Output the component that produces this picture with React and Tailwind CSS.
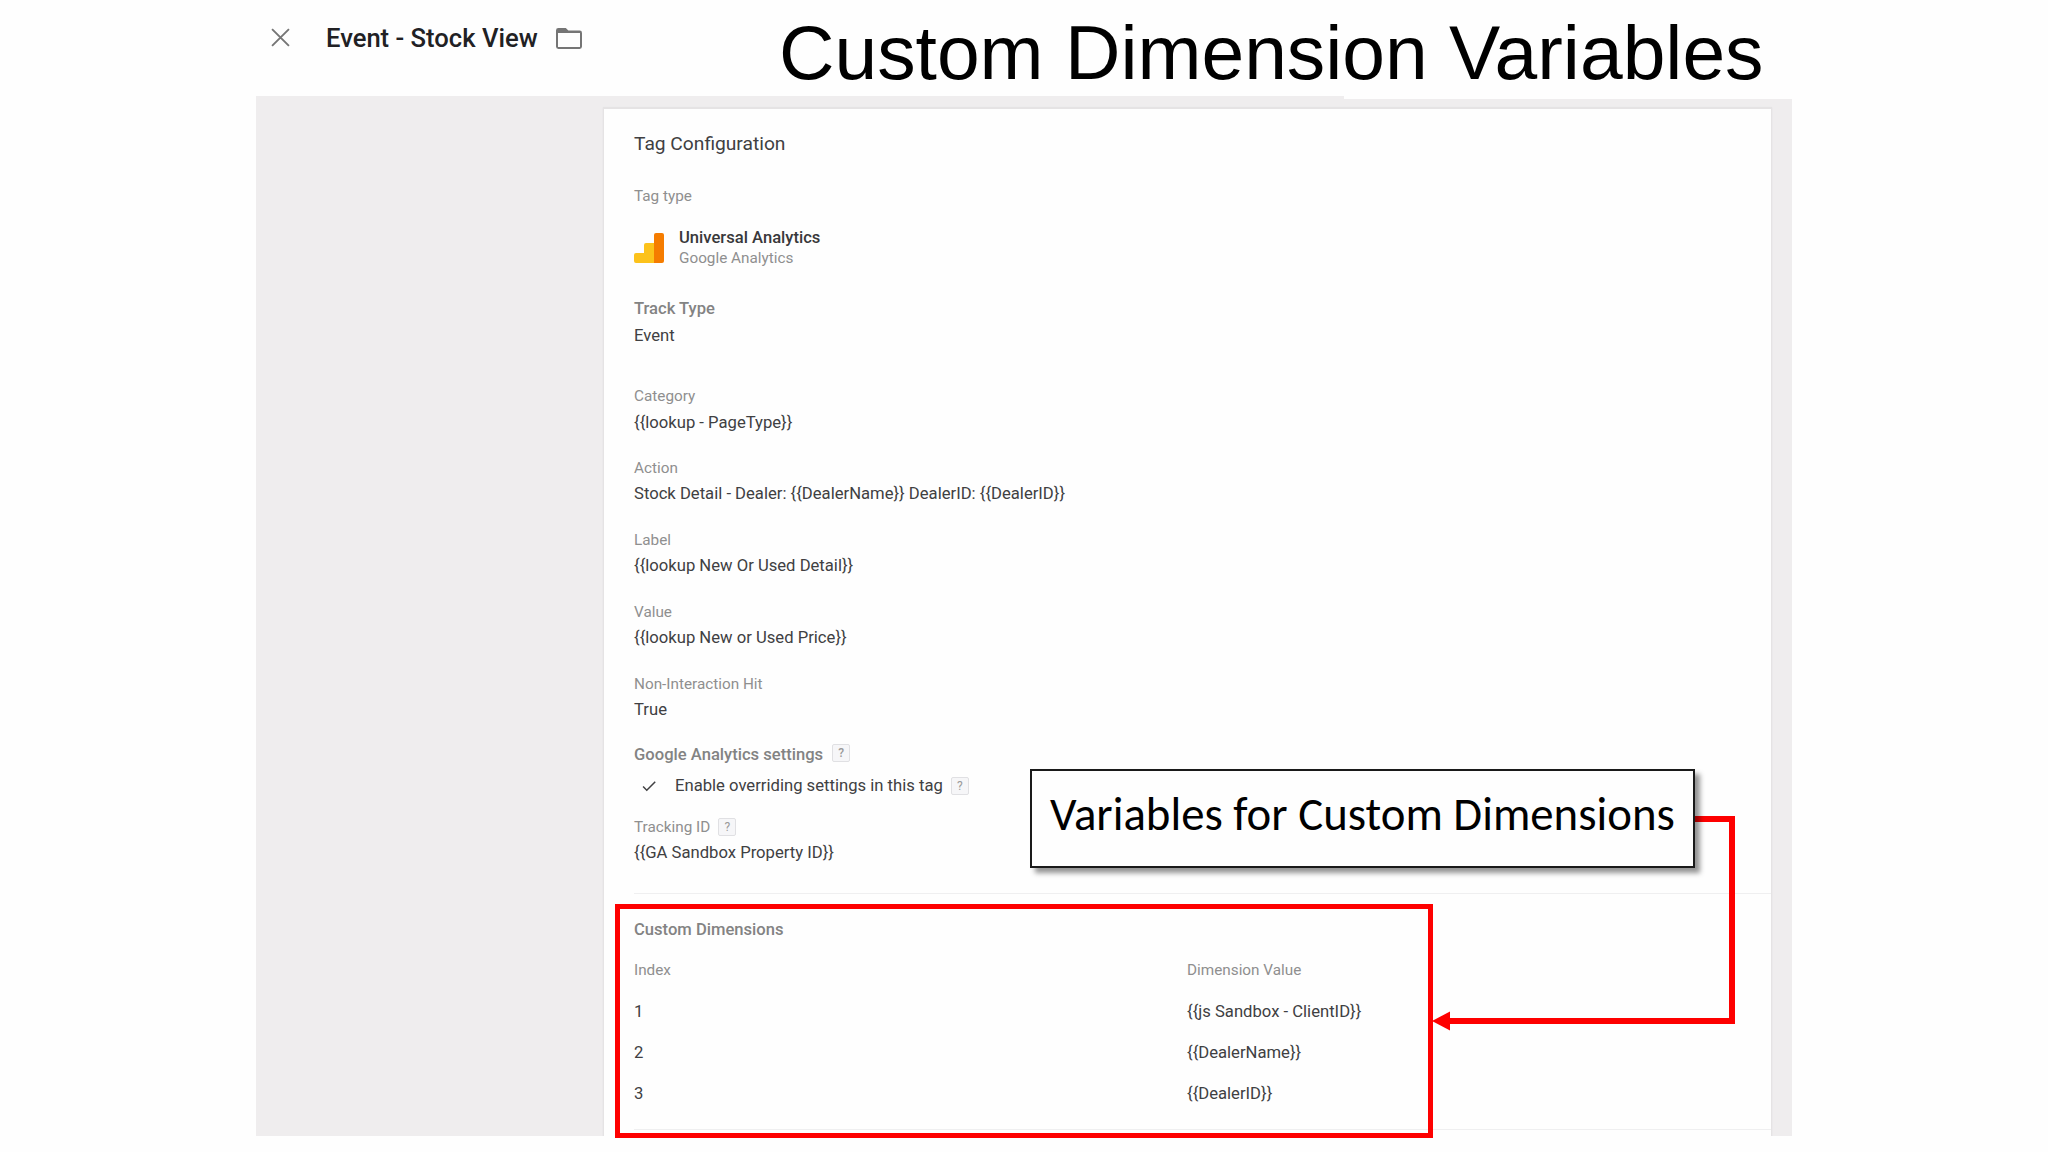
import { MdCheck } from 'react-icons/md';

const fields = [
  { label: 'Category', value: '{{lookup - PageType}}' },
  { label: 'Action', value: 'Stock Detail - Dealer: {{DealerName}} DealerID: {{DealerID}}' },
  { label: 'Label', value: '{{lookup New Or Used Detail}}' },
  { label: 'Value', value: '{{lookup New or Used Price}}' },
  { label: 'Non-Interaction Hit', value: 'True' },
];

const dimensions = [
  { index: '1', value: '{{js Sandbox - ClientID}}' },
  { index: '2', value: '{{DealerName}}' },
  { index: '3', value: '{{DealerID}}' },
];

const labelClass = 'text-[15.3px] leading-5 text-[#8f8f8f]';
const valueClass = 'text-[16.65px] leading-5 text-[#404042]';
const headingClass = 'text-[16.6px] leading-5 font-medium text-[#838383]';

const Help = () => (
  <span className="flex h-[18px] w-[18px] items-center justify-center rounded-[2px] border border-[#e0e0e3] bg-[#f6f6f8] text-[12px] leading-none text-[#9a9a9a]">
    ?
  </span>
);

const Field = ({ label, value, help }) => (
  <div>
    <div className={`flex items-center gap-2 ${labelClass}`}>
      {label}
      {help && <Help />}
    </div>
    <div className={`mt-[6.6px] whitespace-nowrap ${valueClass}`}>{value}</div>
  </div>
);

const AnalyticsLogo = () => (
  <svg width="30" height="30" viewBox="0 0 30 30">
    <path d="M2 20H10V12a2 2 0 0 1 2-2h8v20H2a2 2 0 0 1-2-2v-6a2 2 0 0 1 2-2z" fill="#fcc21b" />
    <path d="M22 0h6a2 2 0 0 1 2 2v26a2 2 0 0 1-2 2h-8V2a2 2 0 0 1 2-2z" fill="#f57c00" />
  </svg>
);

const Header = () => (
  <header className="flex h-24 items-start">
    <svg className="mt-[28px] ml-[15px]" width="19" height="19" viewBox="0 0 18 18" fill="none" stroke="#757575" strokeWidth="1.8">
      <path d="M1 1l16 16M17 1L1 17" />
    </svg>
    <div className="mt-[23px] ml-[36px] w-[212px] whitespace-nowrap text-[25.6px] leading-[30px] font-medium text-[#212124]">
      Event - Stock View
    </div>
    <svg className="mt-7 ml-[18px]" width="26" height="21" viewBox="0 0 26 21">
      <path
        d="M2.5 0h7.3l2.6 2.6h11.1A2.4 2.4 0 0 1 26 5v13.6a2.4 2.4 0 0 1-2.4 2.4H2.4A2.4 2.4 0 0 1 0 18.6V2.4A2.4 2.4 0 0 1 2.4 0zM2 5v14h22V5z"
        fill="#757575"
        fillRule="evenodd"
      />
    </svg>
    <h1 className="ml-[197px] whitespace-nowrap font-['Liberation_Sans',Arial,sans-serif] text-[76.8px] leading-[105px] text-black">
      Custom Dimension Variables
    </h1>
  </header>
);

const TagCard = () => (
  <section className="ml-[348px] h-[1027px] w-[1167px] bg-[#fefefe] pt-[23px] pl-[30px] shadow-[0_-1px_1px_1px_#e5e3e4,0_0_1px_1px_#dfdddf]">
    <h2 className="text-[19.2px] leading-6 text-[#404042]">Tag Configuration</h2>
    <div className={`mt-[29.5px] ${labelClass}`}>Tag type</div>

    <div className="mt-[22.5px] flex items-center gap-[15px]">
      <AnalyticsLogo />
      <div>
        <div className="text-[16.6px] leading-5 font-medium text-[#38383a]">Universal Analytics</div>
        <div className="text-[15.3px] leading-5 text-[#8f8f8f]">Google Analytics</div>
      </div>
    </div>

    <div className={`mt-[31px] ${headingClass}`}>Track Type</div>
    <div className={`mt-[7px] ${valueClass}`}>Event</div>

    <div className="mt-[40px] flex flex-col gap-[25.3px]">
      {fields.map((field) => (
        <Field key={field.label} {...field} />
      ))}
    </div>

    <div className={`mt-[25px] flex items-center gap-[9px] ${headingClass}`}>
      Google Analytics settings
      <span className="-mt-1">
        <Help />
      </span>
    </div>
    <div className={`mt-[11px] flex items-center gap-2 ${valueClass}`}>
      <MdCheck className="ml-1.5 mr-[9px] h-[18px] w-[18px]" />
      Enable overriding settings in this tag
      <Help />
    </div>
    <div className="mt-[20.7px]">
      <Field label="Tracking ID" value="{{GA Sandbox Property ID}}" help />
    </div>

    <hr className="mt-[30px] border-[#efeff0]" />

    <div className={`mt-[25.5px] ${headingClass}`}>Custom Dimensions</div>
    <div className={`mt-[20.5px] grid grid-cols-[553px_1fr] ${labelClass}`}>
      <span>Index</span>
      <span>Dimension Value</span>
    </div>
    <div className="mt-[21.5px] flex flex-col gap-[21px]">
      {dimensions.map((row) => (
        <div key={row.index} className={`grid grid-cols-[553px_1fr] ${valueClass}`}>
          <span>{row.index}</span>
          <span>{row.value}</span>
        </div>
      ))}
    </div>
    <hr className="mt-[25px] border-[#efeff0]" />
  </section>
);

// Slide annotations that sit on top of the tag screen
const Annotations = () => (
  <>
    <div className="absolute top-[904px] left-[615px] h-[234px] w-[818px] border-[5px] border-[#fe0000]" />
    <svg className="absolute top-[800px] left-[1430px]" width="310" height="240" viewBox="0 0 310 240">
      <path d="M262 19H302V221H18" fill="none" stroke="#fe0000" strokeWidth="6" />
      <path d="M2 221l18-9.5v19z" fill="#fe0000" />
    </svg>
    <div className="absolute top-[769px] left-[1030px] h-[99px] w-[665px] border-2 border-[#1a1a1a] bg-[#fefefe] pt-[17px] pl-[18px] font-[Carlito,Lato,sans-serif] text-[46.8px] leading-[52px] whitespace-nowrap text-black shadow-[5px_5px_5px_rgba(0,0,0,0.42)]">
      Variables for Custom Dimensions
    </div>
  </>
);

const App = () => (
  <div className="relative h-[1152px] w-[2048px] overflow-hidden bg-[#fefefe] font-[Roboto,sans-serif]">
    <div className="mx-auto w-[1536px]">
      <Header />
      <main className="h-[1040px] overflow-hidden bg-[#efedee]">
        <div className="ml-auto h-[3px] w-[448px] bg-[#fefefe]" />
        <div className="pt-2.5">
          <TagCard />
        </div>
      </main>
    </div>
    <Annotations />
  </div>
);

export default App;
